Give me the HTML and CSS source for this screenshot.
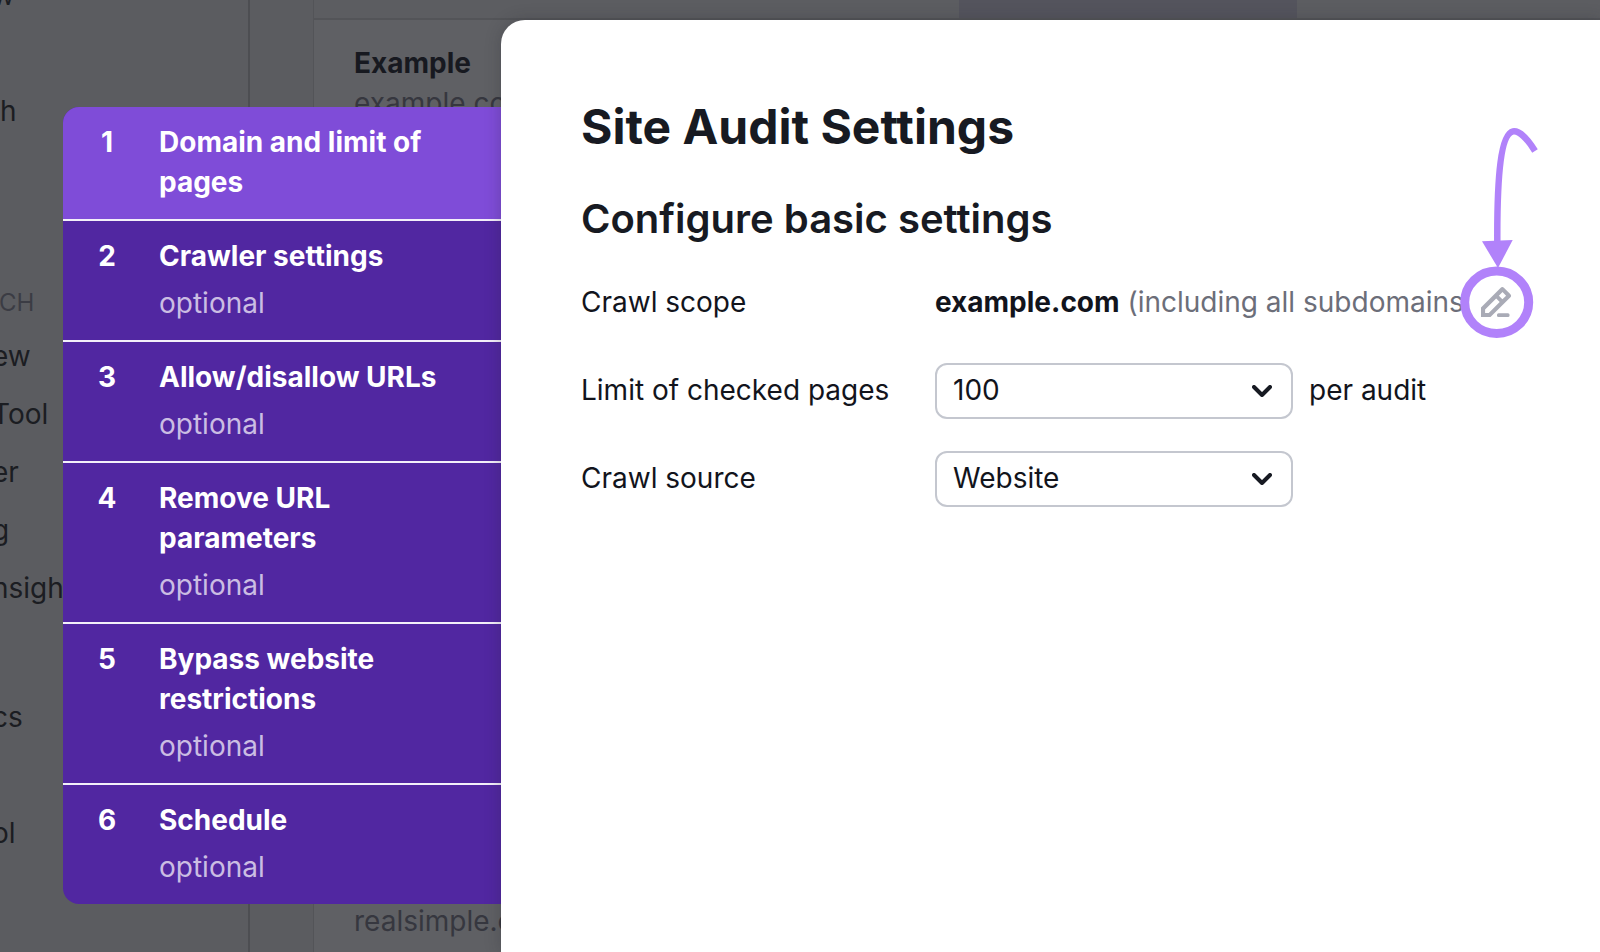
FILE: index.html
```html
<!DOCTYPE html>
<html lang="en">
<head>
<meta charset="utf-8">
<meta name="viewport" content="width=device-width, initial-scale=1">
<title>Site Audit Settings</title>
<link rel="stylesheet" href="styles.css">
</head>
<body>
<div class="app">
  <div class="page">
    <nav class="sidebar">
      <ul class="menu">
        <li>w</li>
        <li></li>
        <li class="inset">h</li>
      </ul>
      <h4 class="menu-title">CH</h4>
      <ul class="menu">
        <li>ew</li>
        <li>Tool</li>
        <li>er</li>
        <li>g</li>
        <li>nsigh</li>
      </ul>
      <ul class="menu menu-last">
        <li>cs</li>
        <li></li>
        <li>ol</li>
      </ul>
    </nav>
    <div class="projects">
      <div class="projects-head"><span class="sorted"></span></div>
      <div class="project">
        <strong>Example</strong>
        <span>example.co</span>
      </div>
      <div class="project project-last">
        <span>realsimple.c</span>
      </div>
    </div>
  </div>

  <div class="overlay">
    <ol class="steps">
      <li><button type="button" class="step active"><span class="num">1</span><span class="name">Domain and limit of pages</span></button></li>
      <li><button type="button" class="step"><span class="num">2</span><span class="name">Crawler settings</span><span class="note">optional</span></button></li>
      <li><button type="button" class="step"><span class="num">3</span><span class="name">Allow/disallow URLs</span><span class="note">optional</span></button></li>
      <li><button type="button" class="step"><span class="num">4</span><span class="name">Remove URL parameters</span><span class="note">optional</span></button></li>
      <li><button type="button" class="step"><span class="num">5</span><span class="name">Bypass website restrictions</span><span class="note">optional</span></button></li>
      <li><button type="button" class="step"><span class="num">6</span><span class="name">Schedule</span><span class="note">optional</span></button></li>
    </ol>

    <main class="dialog">
      <h1>Site Audit Settings</h1>
      <h2>Configure basic settings</h2>
      <form class="form">
        <div class="row">
          <span class="label">Crawl scope</span>
          <span class="scope"><strong>example.com</strong> (including all subdomains</span>
          <span class="edit-wrap">
            <button type="button" class="edit" aria-label="Edit crawl scope">
              <svg width="32" height="32" viewBox="0 0 32 32" fill="#a9abb6">
                <path fill-rule="evenodd" d="M0 30V20.5L19.500 .9Q21.300 -.8 23.100 .9L29.200 6.900Q31 8.700 29.200 10.500L9.500 30ZM4.100 26H7.700L18.700 15L15.200 11.500L4.100 22.400ZM17.900 8.700L21.400 12.200L25.100 8.700L21.500 5.100Z"/>
                <rect x="16" y="26.300" width="12.500" height="3.700" rx="1.500"/>
              </svg>
            </button>
            <svg class="callout" width="80" height="214" viewBox="0 0 80 214" fill="none" stroke="#b182fa">
              <path stroke-width="6.500" d="M75 26C67 13 59 5.500 53 6.400C41 9 37 50 37.300 117"/>
              <path fill="#b182fa" stroke="none" d="M22 116.300L52.700 115L38 143Z"/>
              <ellipse cx="36.700" cy="177.300" rx="32" ry="31.200" stroke-width="9"/>
            </svg>
          </span>
        </div>
        <div class="row">
          <label class="label" for="limit">Limit of checked pages</label>
          <span class="select">
            <select id="limit"><option>100</option></select>
            <svg width="20" height="12" viewBox="0 0 20 12" fill="none" stroke="#171a22" stroke-width="4" stroke-linecap="round" stroke-linejoin="round"><path d="M2 2L10 10L18 2"/></svg>
          </span>
          <span class="unit">per audit</span>
        </div>
        <div class="row">
          <label class="label" for="source">Crawl source</label>
          <span class="select">
            <select id="source"><option>Website</option></select>
            <svg width="20" height="12" viewBox="0 0 20 12" fill="none" stroke="#171a22" stroke-width="4" stroke-linecap="round" stroke-linejoin="round"><path d="M2 2L10 10L18 2"/></svg>
          </span>
        </div>
      </form>
    </main>
  </div>
</div>
</body>
</html>
```
FILE: styles.css
```css
* {
  box-sizing: border-box;
}

body {
  margin: 0;
  font-family: Inter, "Liberation Sans", sans-serif;
  font-size: 28px;
  line-height: 40px;
  color: #12141c;
}

h1, h2, h4, ol, ul {
  margin: 0;
  padding: 0;
}

ol, ul {
  list-style: none;
}

button, select {
  font: inherit;
  color: inherit;
  margin: 0;
}

/* the dimmed page and the dialog share one grid cell */
.app {
  display: grid;
  height: 100vh;
  overflow: hidden;
}

.page, .overlay {
  grid-area: 1 / 1;
  min-width: 0;
  min-height: 0;
}

.page {
  display: flex;
  gap: 63px;
  overflow: hidden;
  background: #5b5c60;
}

.sidebar {
  flex: 0 0 250px;
  border-right: 2px solid #4d4e52;
  color: #1b1d22;
}

.menu {
  margin-left: -8px;
  line-height: 58px;
}

.menu:first-child {
  margin-top: -34px;
}

.menu li {
  height: 58px;
}

.menu-title {
  margin-top: 139px;
  margin-left: -1px;
  font-size: 24px;
  font-weight: 400;
  line-height: 48px;
  color: #3b3c44;
}

.menu .inset {
  padding-left: 8px;
}

.menu-last {
  margin-top: 71px;
}

.projects {
  flex: 1;
  border-left: 1px solid #535458;
  background: #5f6064;
}

.projects-head {
  display: flex;
  height: 20px;
  padding-left: 645px;
  border-bottom: 2px solid #535458;
  background: #5c5d61;
}

.sorted {
  width: 338px;
  background: #54545d;
}

.project {
  display: flex;
  flex-direction: column;
  padding: 23px 40px 0;
  color: #36373f;
}

.project strong {
  color: #171920;
}

.project-last {
  padding-top: 778px;
}

.overlay {
  display: flex;
  align-items: flex-start;
  padding: 20px 0 0 63px;
  z-index: 1;
}

.steps {
  flex: 0 0 438px;
  margin-top: 87px;
  border-radius: 16px 0 0 16px;
  overflow: hidden;
  background: #5127a1;
  color: #fff;
}

.steps li + li {
  border-top: 2px solid #f3effa;
}

.step {
  display: grid;
  grid-template-columns: 88px 1fr;
  column-gap: 8px;
  row-gap: 7px;
  width: 100%;
  padding: 15px 40px 17px 0;
  border: 0;
  background: none;
  text-align: left;
}

.step.active {
  background: #7f4cd8;
}

.num, .name {
  font-weight: 700;
}

.num {
  text-align: center;
}

.note {
  grid-column: 2;
  color: #cbbde3;
}

.dialog {
  flex: 1;
  min-width: 0;
  align-self: stretch;
  padding: 75px 0 0 80px;
  border-radius: 24px 0 0 0;
  background: #fff;
  box-shadow: 0 0 16px rgba(30, 30, 40, .25);
}

h1 {
  font-size: 48px;
  line-height: 64px;
  color: #171a22;
}

h2 {
  margin-top: 36px;
  font-size: 40px;
  font-weight: 600;
  line-height: 48px;
  color: #171a22;
}

.form {
  display: grid;
  gap: 32px;
  margin-top: 32px;
}

.row {
  display: flex;
  align-items: center;
  height: 56px;
  white-space: nowrap;
}

.label, .scope, .unit {
  padding-bottom: 2px;
}

.label {
  flex: 0 0 354px;
}

.scope {
  flex: 0 0 525px;
  min-width: 0;
  color: #6c6e79;
}

.scope strong {
  color: #12141c;
}

.edit-wrap {
  position: relative;
  flex: none;
  width: 74px;
  height: 72px;
}

.edit {
  display: grid;
  place-items: center;
  width: 100%;
  height: 100%;
  padding: 0;
  border: 0;
  border-radius: 50%;
  background: none;
}

/* arrow and ring drawn over the edit button */
.callout {
  position: absolute;
  left: 0;
  bottom: 0;
  pointer-events: none;
}

.select {
  display: grid;
  align-items: center;
  width: 358px;
  margin-right: 16px;
}

.select select, .select svg {
  grid-area: 1 / 1;
}

.select select {
  appearance: none;
  width: 100%;
  height: 56px;
  padding: 0 56px 2px 16px;
  border: 2px solid #c4c7cf;
  border-radius: 12px;
  background: #fff;
}

.select svg {
  justify-self: end;
  margin-right: 21px;
  pointer-events: none;
}
```
